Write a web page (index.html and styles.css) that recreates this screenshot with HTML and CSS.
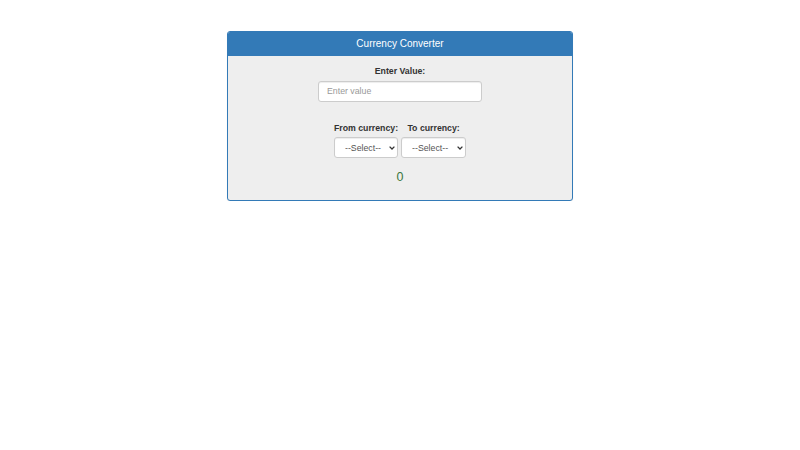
FILE: index.html
```html
<!DOCTYPE html>
<html lang="en">
<head>
<meta charset="utf-8">
<title>Currency Converter</title>
<link rel="stylesheet" href="styles.css">
</head>
<body>
<div class="panel">
  <div class="panel-heading">Currency Converter</div>
  <div class="panel-body">
    <label class="field-label" for="amount">Enter Value:</label>
    <input class="value-input" id="amount" type="text" placeholder="Enter value">
    <div class="select-row">
      <div class="select-col">
        <label class="field-label" for="from">From currency:</label>
        <span class="select-wrap">
          <select class="currency-select" id="from"><option>--Select--</option></select>
          <svg class="chevron" width="6" height="4" viewBox="0 0 6 4" aria-hidden="true"><path d="M0.6 0.6 L3 3 L5.4 0.6" fill="none" stroke="#333" stroke-width="1.3"/></svg>
        </span>
      </div>
      <div class="select-col">
        <label class="field-label" for="to">To currency:</label>
        <span class="select-wrap">
          <select class="currency-select to" id="to"><option>--Select--</option></select>
          <svg class="chevron" width="6" height="4" viewBox="0 0 6 4" aria-hidden="true"><path d="M0.6 0.6 L3 3 L5.4 0.6" fill="none" stroke="#333" stroke-width="1.3"/></svg>
        </span>
      </div>
    </div>
    <div class="result">0</div>
  </div>
</div>
</body>
</html>
```
FILE: styles.css
```css
* { box-sizing: border-box; }
html, body {
  margin: 0;
  padding: 0;
  background: #fff;
  font-family: "Liberation Sans", Arial, Helvetica, sans-serif;
  font-size: 8.75px;
  color: #333;
}
.panel {
  width: 346px;
  height: 170px;
  margin: 31px auto 0;
  border: 1px solid #337ab7;
  border-radius: 3px;
  background: #eeeeee;
  box-shadow: 0 1px 1px rgba(0,0,0,0.08);
  overflow: hidden;
  display: flex;
  flex-direction: column;
}
.panel-heading {
  height: 24px;
  background: #337ab7;
  color: #fff;
  font-size: 10px;
  line-height: 24px;
  text-align: center;
}
.panel-body {
  display: flex;
  flex-direction: column;
  align-items: center;
  padding-top: 9px;
}
.field-label {
  display: block;
  font-weight: bold;
  line-height: 12.5px;
  margin-bottom: 3px;
}
.value-input {
  width: 164px;
  height: 21px;
  border: 1px solid #ccc;
  border-radius: 3px;
  padding: 0 8px;
  font-family: inherit;
  font-size: 8.75px;
  color: #555;
  background: #fff;
  box-shadow: inset 0 1px 1px rgba(0,0,0,0.075);
  outline: none;
}
.value-input::placeholder { color: #999; }
.select-row {
  display: flex;
  gap: 3px;
  margin-top: 20px;
}
.select-col {
  display: flex;
  flex-direction: column;
  align-items: center;
}
.select-wrap {
  position: relative;
  display: block;
}
.currency-select {
  display: block;
  -webkit-appearance: none;
  appearance: none;
  width: 64px;
  height: 21px;
  border: 1px solid #ccc;
  border-radius: 3px;
  background: #fff;
  font-family: inherit;
  font-size: 8.75px;
  color: #555;
  padding: 0 0 0 10px;
  box-shadow: inset 0 1px 1px rgba(0,0,0,0.075);
}
.currency-select.to { width: 65px; }
.chevron {
  position: absolute;
  right: 3px;
  top: 9px;
  pointer-events: none;
}
.result {
  margin-top: 12px;
  font-size: 12.5px;
  line-height: 14px;
  color: #3c763d;
}
```
